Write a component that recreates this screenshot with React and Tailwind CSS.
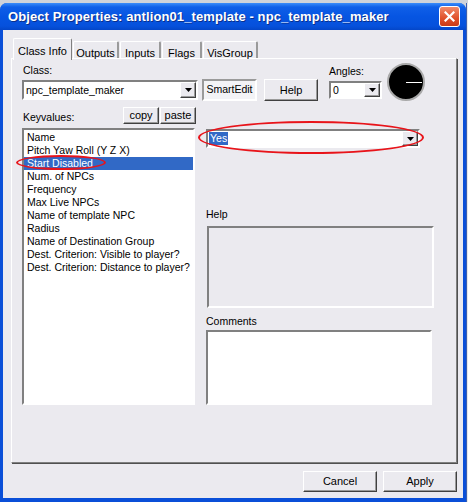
import React from "react";

const font = "font-['Liberation_Sans',Arial,sans-serif]";
const sunken = "border-2 border-t-[#808080] border-l-[#808080] border-b-white border-r-white";
const raised =
  "border border-t-white border-l-white border-r-[#404040] border-b-[#404040] shadow-[inset_-1px_-1px_0_#9a9a9a] bg-[#ebeaef]";

function Arrow() {
  return (
    <svg width="7" height="4" viewBox="0 0 7 4" aria-hidden>
      <path d="M0 0h7L3.5 4z" fill="#000" />
    </svg>
  );
}

function DropButton() {
  return (
    <div className={`w-[16px] h-full flex items-center justify-center ${raised}`}>
      <Arrow />
    </div>
  );
}

function Combo({ value, className = "", selected = false }) {
  return (
    <div className={`${sunken} bg-white flex items-stretch ${className}`}>
      <div className="flex-1 flex items-center pl-[1px] overflow-hidden">
        {selected ? (
          <span className="bg-[#3169c6] text-white leading-[13px] px-px">{value}</span>
        ) : (
          <span className="leading-[13px] pl-[1px]">{value}</span>
        )}
      </div>
      <DropButton />
    </div>
  );
}

function Button({ children, className = "" }) {
  return <div className={`${raised} flex items-center justify-center ${className}`}>{children}</div>;
}

const tabs = [
  { label: "Class Info", w: "w-[59px]", active: true },
  { label: "Outputs", w: "w-[46px]" },
  { label: "Inputs", w: "w-[41px]" },
  { label: "Flags", w: "w-[40px]" },
  { label: "VisGroup", w: "w-[55px]" },
];

const keyvalues = [
  "Name",
  "Pitch Yaw Roll (Y Z X)",
  "Start Disabled",
  "Num. of NPCs",
  "Frequency",
  "Max Live NPCs",
  "Name of template NPC",
  "Radius",
  "Name of Destination Group",
  "Dest. Criterion: Visible to player?",
  "Dest. Criterion: Distance to player?",
];

export default function App() {
  return (
    <div className={`relative w-[468px] h-[502px] overflow-hidden bg-[#cfd3da] flex pt-[3px] text-[10.5px] text-black ${font}`}>
      {/* window */}
      <div className="w-[466px] h-[499px] flex flex-col rounded-t-[7px] bg-[#0a4fd8] px-[3px] pb-[4px]">
        {/* title bar */}
        <div className="-mx-[3px] h-[27px] rounded-t-[7px] flex items-center pl-[8px] pr-[6px] bg-[linear-gradient(to_bottom,#3a8dfa_0%,#0f5fe8_15%,#0655e2_50%,#0651dc_85%,#0446c8_100%)]">
          <span className="flex-1 text-white font-bold text-[13px] tracking-[0.1px] [text-shadow:1px_1px_0_#0a2f8a]">
            Object Properties: antlion01_template - npc_template_maker
          </span>
          <div className="w-[21px] h-[21px] rounded-[3px] border border-white bg-[linear-gradient(to_bottom,#f08a6a,#e0502a_60%,#c83a18)] flex items-center justify-center">
            <svg width="11" height="11" viewBox="0 0 11 11" aria-hidden>
              <path d="M1.5 1.5l8 8M9.5 1.5l-8 8" stroke="#fff" strokeWidth="2.2" strokeLinecap="square" />
            </svg>
          </div>
        </div>

        {/* body */}
        <div className="flex-1 bg-[#ebeaef] flex flex-col pt-[8px] pb-[6px]">
          {/* tabs */}
          <div className="h-[20px] flex items-end pl-[10px] gap-[1px] relative z-10">
            {tabs.map((t) =>
              t.active ? (
                <div
                  key={t.label}
                  className={`${t.w} h-[22px] -mb-[2px] bg-[#ebeaef] border-t border-l border-t-white border-l-white border-r border-r-[#808080] rounded-t-[2px] flex items-start justify-center pt-[4px] text-[11px]`}
                >
                  {t.label}
                </div>
              ) : (
                <div
                  key={t.label}
                  className={`${t.w} h-[17px] border-t border-l border-t-white border-l-white border-r-2 border-r-[#9a9a9a] rounded-t-[2px] flex items-start justify-center pt-[3px] text-[11px]`}
                >
                  {t.label}
                </div>
              )
            )}
          </div>

          {/* panel */}
          <div className="ml-[8px] w-[446px] h-[405px] border border-t-white border-l-white border-r-[#808080] border-b-[#808080] shadow-[1px_1px_0_#505050] flex flex-col pl-[10px]">
            {/* row 1 */}
            <div className="h-[43px] flex items-start">
              <div className="w-[176px] flex flex-col">
                <div className="mt-[5px] pl-[1px] leading-[13px]">Class:</div>
                <Combo value="npc_template_maker" className="mt-[3px] h-[20px]" />
              </div>
              <div className="ml-[4px] mt-[20px] w-[55px] h-[22px] border-2 border-t-[#9a9a9a] border-l-[#9a9a9a] border-r-white border-b-white bg-[#f3f3f6] flex items-center justify-center">
                SmartEdit
              </div>
              <Button className="ml-[7px] mt-[20px] w-[54px] h-[22px] text-[11px]">Help</Button>
              <div className="ml-[11px] w-[53px] flex flex-col">
                <div className="mt-[6px] leading-[13px]">Angles:</div>
                <Combo value="0" className="mt-[3px] h-[18px]" />
              </div>
              <div className="ml-[5px] mt-[4px] w-[38px] h-[38px] rounded-full bg-black border-2 border-[#a9a9a9] relative">
                <div className="absolute left-1/2 top-1/2 w-[16px] h-[1px] bg-white" />
              </div>
            </div>

            {/* row 2 */}
            <div className="mt-[5px] w-[174px] h-[17px] flex items-end">
              <div className="flex-1 pl-[1px] leading-[13px]">Keyvalues:</div>
              <Button className="w-[36px] h-[17px] text-[11px]">copy</Button>
              <Button className="ml-[1px] w-[36px] h-[17px] text-[11px]">paste</Button>
            </div>

            {/* row 3 */}
            <div className="mt-[4px] flex items-start">
              <div className={`${sunken} bg-white w-[173px] h-[277px] pt-[1px] overflow-hidden`}>
                {keyvalues.map((k) => (
                  <div
                    key={k}
                    className={`h-[13px] leading-[13px] pl-[3px] whitespace-nowrap ${
                      k === "Start Disabled" ? "bg-[#3169c6] text-white" : ""
                    }`}
                  >
                    {k}
                  </div>
                ))}
              </div>
              <div className="ml-[11px] flex flex-col">
                <Combo value="Yes" selected className="mt-[1px] w-[214px] h-[19px]" />
                <div className="mt-[60px] leading-[13px]">Help</div>
                <div className={`${sunken} mt-[5px] ml-[1px] w-[227px] h-[82px]`} />
                <div className="mt-[7px] leading-[13px]">Comments</div>
                <div className={`${sunken} bg-white mt-[2px] w-[226px] h-[75px]`} />
              </div>
            </div>
          </div>

          {/* footer buttons */}
          <div className="mt-[8px] flex justify-end gap-[6px] pr-[6px]">
            <Button className="w-[74px] h-[21px] text-[11px]">Cancel</Button>
            <Button className="w-[74px] h-[21px] text-[11px]">Apply</Button>
          </div>
        </div>
      </div>

      {/* desktop strip at the right */}
      <div className="flex-1 bg-[#e8e8ea] border-l border-[#3a5fb0]" />

      {/* red annotation ellipses */}
      <div className="absolute left-[16px] top-[155px] w-[90px] h-[15px] rounded-[50%] border-2 border-[#e8141a]" />
      <div className="absolute left-[198px] top-[121px] w-[226px] h-[33px] rounded-[50%] border-[2.5px] border-[#e8141a]" />
    </div>
  );
}
